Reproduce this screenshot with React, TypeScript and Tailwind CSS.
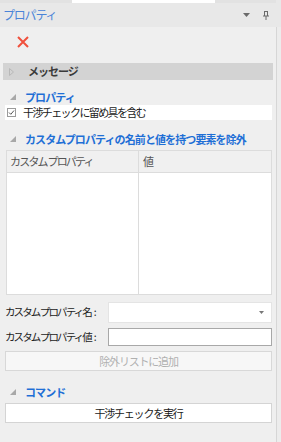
import * as React from "react";

const jp = { fontFamily: '"Meiryo UI", "Noto Sans CJK JP", sans-serif' };

const Expanded: React.FC = () => (
    <svg width="6" height="6" viewBox="0 0 6 6" className="shrink-0">
        <polygon points="6,0 6,6 0,6" fill="#a8a8a8" />
    </svg>
);

const SectionHead: React.FC<{ label: string }> = ({ label }) => (
    <div className="flex items-center h-[16px] pl-[10px]">
        <Expanded />
        <span className="ml-[9px] text-[11px] font-bold text-[#1f6fd6] tracking-[-0.9px] leading-none">{label}</span>
    </div>
);

const FieldLabel: React.FC<{ text: string }> = ({ text }) => (
    <span className="w-[103px] shrink-0 text-[10.5px] text-[#222] leading-none whitespace-nowrap flex items-center">
        <span className="tracking-[-1.9px]">{text}</span>
        <span className="ml-[3px]">:</span>
    </span>
);

export default function App() {
    return (
        <div className="w-[281px] h-[442px] flex bg-[#efefef] overflow-hidden" style={jp}>
            <div className="w-[276px] flex flex-col">
                {/* tab strip */}
                <div className="h-[3px] bg-[#e2e2e2] flex">
                    <div className="ml-[72px] w-[143px] bg-white" />
                </div>

                {/* title bar */}
                <div className="h-[24px] bg-[#e8e8e8] flex items-center pl-[3px] pr-[6px]">
                    <span className="text-[12px] text-[#4a84d8] tracking-[-1.2px] leading-none">プロパティ</span>
                    <div className="ml-auto flex items-center gap-[12px]">
                        <svg width="7" height="4" viewBox="0 0 7 4">
                            <polygon points="0,0 7,0 3.5,4" fill="#6a6a6a" />
                        </svg>
                        <svg width="8" height="9" viewBox="0 0 8 9">
                            <path d="M2 0.5h4M2.5 0.5v4.5M5.5 0.5v4.5M1 5h6M4 5v4" stroke="#6a6a6a" strokeWidth="1" fill="none" />
                        </svg>
                    </div>
                </div>

                {/* toolbar */}
                <div className="h-[30px] flex items-center pl-[17px]">
                    <svg width="12" height="12" viewBox="0 0 12 12">
                        <path d="M1 1L11 11M11 1L1 11" stroke="#f0503c" strokeWidth="2" />
                    </svg>
                </div>

                {/* messages */}
                <div className="mt-[6px] mx-[3px] h-[17px] bg-[#d3d3d3] flex items-center pl-[6px]">
                    <svg width="5" height="8" viewBox="0 0 5 8">
                        <polygon points="0.5,0.5 4.5,4 0.5,7.5" fill="none" stroke="#b8b8b8" strokeWidth="1" />
                    </svg>
                    <span className="ml-[14px] text-[11px] font-bold text-[#3a3a3a] tracking-[-1px] leading-none">メッセージ</span>
                </div>

                <div className="mt-[9px]">
                    <SectionHead label="プロパティ" />
                </div>

                {/* checkbox row */}
                <div className="ml-[5px] mr-[4px] h-[15px] bg-white flex items-center pl-[2px]">
                    <div className="w-[9px] h-[9px] border border-[#9a9a9a] bg-white flex items-center justify-center">
                        <svg width="7" height="7" viewBox="0 0 7 7">
                            <path d="M1 3.5L2.8 5.3L6 1.5" stroke="#555" strokeWidth="1" fill="none" />
                        </svg>
                    </div>
                    <span className="ml-[7px] text-[11px] text-[#222] tracking-[-1.6px] leading-none whitespace-nowrap">干渉チェックに留め具を含む</span>
                </div>

                <div className="mt-[11px]">
                    <SectionHead label="カスタムプロパティの名前と値を持つ要素を除外" />
                </div>

                {/* table */}
                <div className="mt-[3px] ml-[6px] mr-[4px] h-[145px] border border-[#dcdcdc] bg-white flex flex-col">
                    <div className="h-[22px] bg-[#f0f0f0] grid grid-cols-[132px_1fr] border-b border-[#dcdcdc]">
                        <div className="border-r border-[#dcdcdc] flex items-center pl-[3px] text-[11px] text-[#555] tracking-[-1.8px] whitespace-nowrap">カスタム プロパティ</div>
                        <div className="flex items-center pl-[4px] text-[11px] text-[#555]">値</div>
                    </div>
                    <div className="flex-1 grid grid-cols-[132px_1fr]">
                        <div className="border-r border-[#dcdcdc]" />
                        <div />
                    </div>
                </div>

                {/* name / value rows */}
                <div className="mt-[7px] ml-[5px] mr-[4px] flex flex-col gap-[6px]">
                    <div className="flex items-center h-[21px]">
                        <FieldLabel text="カスタム プロパティ名" />
                        <div className="flex-1 h-[21px] bg-white border border-[#e4e4e4] flex items-center justify-end pr-[7px]">
                            <svg width="5" height="3" viewBox="0 0 5 3">
                                <polygon points="0,0 5,0 2.5,3" fill="#777" />
                            </svg>
                        </div>
                    </div>
                    <div className="flex items-center h-[18px] -mt-[1px]">
                        <FieldLabel text="カスタム プロパティ値" />
                        <div className="flex-1 h-[18px] bg-white border border-[#a8a8a8]" />
                    </div>
                    <div className="h-[20px] -mt-[1px] bg-[#f7f7f7] border border-[#d8d8d8] flex items-center justify-center text-[11px] text-[#b0b0b0] tracking-[-1.2px]">
                        除外リストに追加
                    </div>
                </div>

                <div className="mt-[13px]">
                    <SectionHead label="コマンド" />
                </div>

                <div className="mt-[3px] ml-[5px] mr-[4px] h-[20px] bg-white border border-[#d4d4d4] flex items-center justify-center text-[11px] text-[#222] tracking-[-1.2px]">
                    干渉チェックを実行
                </div>
            </div>

            {/* right edge */}
            <div className="w-[5px] flex flex-col">
                <div className="h-[27px] bg-[#e8e8e8]" />
                <div className="flex-1 border-l border-[#d6d6d6] bg-[#ececec]" />
            </div>
        </div>
    );
}
